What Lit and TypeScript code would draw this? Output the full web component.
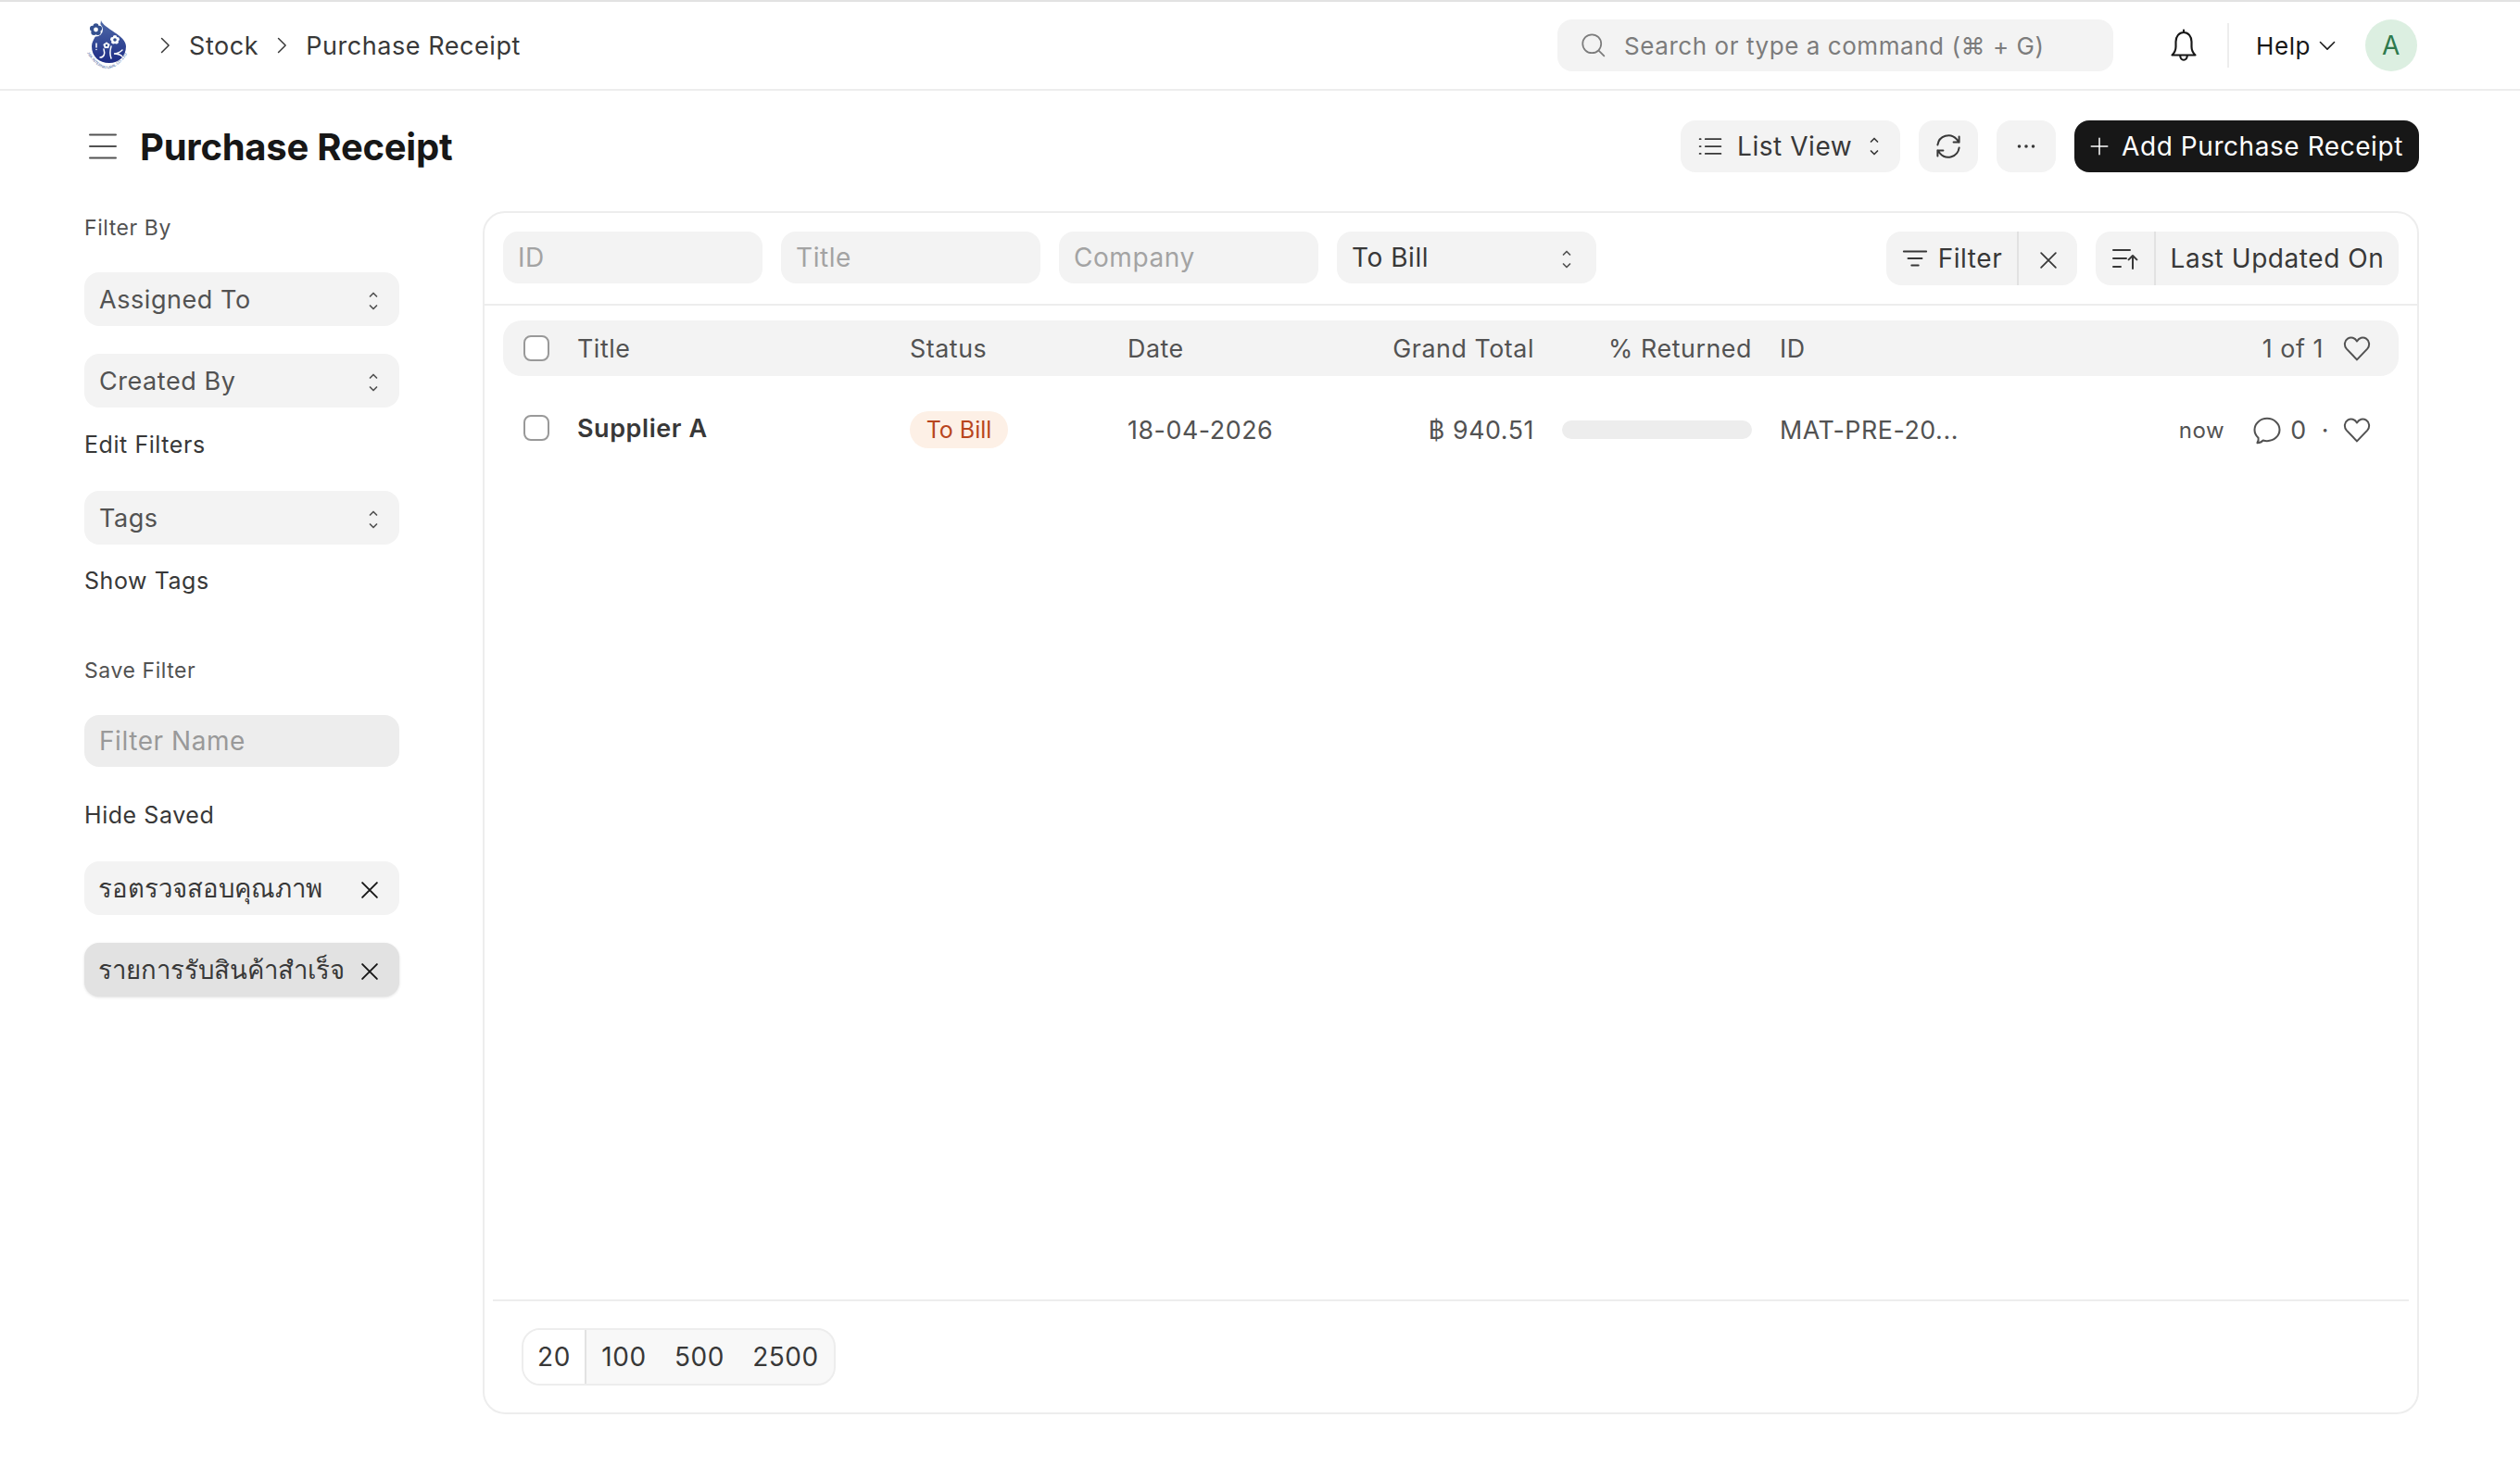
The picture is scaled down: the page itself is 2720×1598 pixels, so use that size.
import { LitElement, html, css, svg } from 'lit'
import { customElement } from 'lit/decorators.js'

// shared stroke icon wrapper, all icons are drawn on a 16 unit grid
const icon = (size: number, body: unknown, sw = 1) => html`
    <svg class="icon" width=${size} height=${size} viewBox="0 0 16 16" fill="none"
        stroke="currentColor" stroke-width=${sw} stroke-linecap="round" stroke-linejoin="round">${body}</svg>
`

const updown = html`
    <svg class="updown" width="12" height="22" viewBox="0 0 12 22" fill="none" stroke="currentColor"
        stroke-width="1.7" stroke-linecap="round" stroke-linejoin="round">
        <path d="M2.5 6 6 2.5 9.5 6M2.5 16 6 19.5 9.5 16" />
    </svg>
`
const closeX = svg`<path d="M3.5 3.5l9 9M12.5 3.5l-9 9" />`
const heart = svg`<path d="M8 14.2 2.4 8.3C.9 6.6 1.2 4 3 2.8c1.8-1.2 3.9-.5 5 1.4 1.1-1.9 3.2-2.6 5-1.4 1.8 1.2 2.1 3.8.6 5.5L8 14.2Z" />`
const chevron = svg`<path d="M5.500 2.500 11 8l-5.500 5.500" />`

const flower = (x: number, y: number, r: number, fill: string, hole: string) => svg`
    <g fill=${fill}>
        ${[0, 72, 144, 216, 288].map((a) => {
            const t = (a * Math.PI) / 180
            return svg`<circle cx=${x + Math.sin(t) * r * 0.62} cy=${y - Math.cos(t) * r * 0.62} r=${r * 0.5} />`
        })}
        <circle cx=${x} cy=${y} r=${r * 0.4} fill=${hole} />
    </g>
`

@customElement('app-root')
export class AppRoot extends LitElement {
    static styles = css`
        :host {
            display: block;
            width: 2720px;
            min-height: 1598px;
            background: #fff;
            color: #383838;
            font-family: Inter, 'Noto Sans', sans-serif;
            font-size: 28px;
            letter-spacing: 0.02em;
        }

        .icon,
        .updown {
            display: block;
            flex: none;
        }

        .navbar {
            box-sizing: border-box;
            height: 98px;
            border-top: 2px solid #e2e2e2;
            border-bottom: 2px solid #ededed;
            padding: 0 111px 0 93px;
            display: flex;
            align-items: center;
        }

        .crumbs {
            display: flex;
            align-items: center;
            margin-left: 26px;
            flex: 1;
            color: #383838;
            font-size: 27px;
        }

        .crumbs .icon {
            margin-right: 15px;
        }

        .crumbs span {
            margin-right: 14px;
        }

        .search {
            box-sizing: border-box;
            width: 600px;
            height: 56px;
            border-radius: 16px;
            background: #f3f3f3;
            color: #7c7c7c;
            display: flex;
            align-items: center;
            padding-left: 25px;
            gap: 19px;
            font-size: 26px;
        }

        .bell {
            margin-left: 56px;
            color: #171717;
        }

        .nav-sep {
            width: 2px;
            height: 48px;
            background: #ededed;
            margin: 0 29px 0 27px;
        }

        .help {
            display: flex;
            align-items: center;
            gap: 7px;
            color: #171717;
            font-size: 26px;
        }

        .avatar {
            width: 56px;
            height: 56px;
            border-radius: 50%;
            background: #dcefe1;
            color: #2f7a4d;
            display: flex;
            align-items: center;
            justify-content: center;
            margin-left: 30px;
        }

        .page {
            padding: 0 109px 0 91px;
        }

        .page-head {
            display: flex;
            align-items: center;
            height: 56px;
            padding: 32px 0 42px;
        }

        .page-head .burger {
            margin-left: 4px;
            margin-right: 24px;
            color: #525252;
        }

        h1 {
            margin: 0;
            flex: 1;
            font-size: 40px;
            font-weight: 700;
            color: #171717;
            letter-spacing: -0.006em;
        }

        .btn {
            box-sizing: border-box;
            height: 56px;
            border-radius: 16px;
            background: #f3f3f3;
            color: #383838;
            display: flex;
            align-items: center;
            justify-content: center;
            margin-left: 20px;
        }

        .btn.list {
            width: 237px;
            justify-content: flex-start;
            padding-left: 18px;
            gap: 15px;
        }

        .btn.list span {
            margin-right: 3px;
        }

        .btn.square {
            width: 64px;
        }

        .btn.primary {
            width: 372px;
            background: #171717;
            color: #fff;
            gap: 14px;
        }

        .body {
            display: flex;
            gap: 90px;
            align-items: flex-start;
        }

        .sidebar {
            width: 340px;
            flex: none;
            color: #525252;
        }

        .side-label {
            font-size: 23px;
            line-height: 36px;
            color: #525252;
        }

        .side-link {
            font-size: 25px;
            line-height: 36px;
            color: #383838;
        }

        .side-field {
            box-sizing: border-box;
            height: 58px;
            border-radius: 16px;
            background: #f3f3f3;
            color: #525252;
            display: flex;
            align-items: center;
            justify-content: space-between;
            padding: 0 22px 0 16px;
            white-space: nowrap;
            font-size: 27px;
        }

        .side-field .updown {
            margin-top: 4px;
        }

        .side-field.name {
            height: 56px;
            background: #ededed;
            color: #999;
            font-size: 28px;
        }

        .side-field.saved {
            color: #383838;
            padding: 0 18px 0 15px;
            font-size: 27.5px;
            letter-spacing: 0;
        }

        .side-field.active {
            background: #e2e2e2;
            box-shadow: 0 1px 3px rgba(0, 0, 0, 0.12);
        }

        .side-field .x {
            color: #171717;
            margin-top: 4px;
        }

        .mt22 {
            margin-top: 22px;
        }

        .mt21 {
            margin-top: 21px;
        }

        .mt30 {
            margin-top: 30px;
        }

        .mt32 {
            margin-top: 32px;
        }

        .mt34 {
            margin-top: 34px;
        }

        .mt61 {
            margin-top: 61px;
        }

        .card {
            box-sizing: border-box;
            flex: 1;
            height: 1299px;
            border: 2px solid #ededed;
            border-radius: 24px;
            display: flex;
            flex-direction: column;
        }

        .filters {
            display: flex;
            align-items: flex-start;
            gap: 20px;
            padding: 20px 20px 20px;
            height: 58px;
            border-bottom: 2px solid #ededed;
        }

        .filters .std {
            box-sizing: border-box;
            width: 280px;
            height: 56px;
            border-radius: 16px;
            background: #f3f3f3;
            color: #a3a3a3;
            display: flex;
            align-items: center;
            padding: 0 26px 0 16px;
        }

        .filters .std.select {
            color: #383838;
            justify-content: space-between;
        }

        .filters .std.select .updown {
            color: #525252;
            margin-top: 3px;
        }

        .spacer {
            flex: 1;
        }

        .group {
            height: 58px;
            border-radius: 16px;
            background: #f3f3f3;
            display: flex;
            align-items: stretch;
            color: #383838;
        }

        .group > div {
            display: flex;
            align-items: center;
            justify-content: center;
            box-sizing: border-box;
        }

        .group > div + div {
            border-left: 2px solid #e2e2e2;
        }

        .group .f-main {
            width: 141px;
            gap: 10px;
        }

        .group .f-x {
            width: 65px;
            padding-top: 4px;
        }

        .group .s-icon {
            width: 63px;
        }

        .group .s-label {
            width: 264px;
        }

        .list-head,
        .list-row {
            display: grid;
            grid-template-columns: 58px 359px 235px 232px 207px 235px 300px 1fr;
            align-items: center;
            padding: 0 29px 0 22px;
            margin: 0 20px;
            color: #525252;
            font-size: 26.8px;
        }

        .list-head {
            margin-top: 16px;
            height: 60px;
            background: #f3f3f3;
            border-radius: 20px;
        }

        .list-row {
            height: 116px;
        }

        .check {
            box-sizing: border-box;
            width: 28px;
            height: 28px;
            border-radius: 8px;
            border: 2px solid #999;
            background: #fff;
        }

        .list-row .check {
            margin-bottom: 4px;
        }

        .num {
            text-align: right;
        }

        .pad {
            padding-left: 30px;
        }

        .end {
            display: flex;
            align-items: center;
            justify-content: flex-end;
        }

        .strong {
            font-weight: 600;
            color: #383838;
            font-size: 27px;
            margin-bottom: 4px;
        }

        .badge {
            display: inline-flex;
            align-items: center;
            justify-content: center;
            box-sizing: border-box;
            width: 106px;
            height: 40px;
            border-radius: 20px;
            background: #fdf0e6;
            color: #b8451d;
            font-size: 25px;
            letter-spacing: 0;
        }

        .bar {
            height: 20px;
            border-radius: 10px;
            background: #ededed;
        }

        .now {
            font-size: 24px;
            margin-right: 28px;
        }

        .count {
            margin-left: 7px;
        }

        .dot {
            margin: 0 14px 0 16px;
        }

        .of {
            margin-right: 20px;
        }

        .listing {
            flex: 1;
        }

        .foot {
            margin: 0 9px;
            border-top: 2px solid #ededed;
            padding: 29px 31px 0;
            height: 91px;
        }

        .paging {
            display: inline-flex;
            box-sizing: border-box;
            height: 62px;
            border: 2px solid #ededed;
            border-radius: 20px;
            background: #f8f8f8;
            overflow: hidden;
            align-items: stretch;
            color: #383838;
        }

        .paging div {
            display: flex;
            align-items: center;
            justify-content: center;
            box-sizing: border-box;
        }

        .paging .cur {
            width: 68px;
            background: #fff;
            border-right: 2px solid #e2e2e2;
        }

        .paging .n100 {
            width: 81px;
        }

        .paging .n500 {
            width: 82px;
        }

        .paging .n2500 {
            width: 104px;
        }
    `

    private logo() {
        return html`
            <svg width="48" height="55" viewBox="93 22 48 55">
                <defs>
                    <linearGradient id="drop" x1="0" y1="0" x2="0" y2="1">
                        <stop offset="0" stop-color="#4f6aa8" />
                        <stop offset="1" stop-color="#1d2c85" />
                    </linearGradient>
                    <path id="ring" d="M94 57Q116 93 140 54" />
                </defs>
                <path d="M109 22C112 31 136 38 136 50 136 61 128 68 118 68 107 68 99 61 99 50 99 42 108 36 109 22Z"
                    fill="url(#drop)" />
                <circle cx="103.500" cy="32" r="7.500" fill="#fff" />
                ${flower(103.5, 32, 6, '#34508f', '#fff')}
                ${flower(124, 43, 4.5, '#fff', '#34508f')}
                ${flower(115, 49, 3.2, '#fff', '#34508f')}
                <path d="M104 47v4M104 53.500v.1M112 53c1.500 5 .5 9-4 9M120 50c-1.500 5-1.500 9 0 13M132 54c-3 3-6 4-9 4 3 0 7 1 9 3"
                    fill="none" stroke="#fff" stroke-width="1.500" stroke-linecap="round" />
                <text font-size="4.100" fill="#3d5c9e" font-family="Liberation Sans, sans-serif" letter-spacing="0">
                    <textPath href="#ring">J&amp;K INTERNATURAL CO.,LTD</textPath>
                </text>
            </svg>
        `
    }

    render() {
        return html`
            <div class="navbar">
                ${this.logo()}
                <div class="crumbs">
                    ${icon(22, chevron, 1.1)}
                    <span>Stock</span>
                    ${icon(22, chevron, 1.1)}
                    <span>Purchase Receipt</span>
                </div>
                <div class="search">
                    ${icon(28, svg`<circle cx="7" cy="7" r="5.700" /><path d="M11.200 11.200 14.500 14.500" />`)}
                    <span>Search or type a command (⌘ + G)</span>
                </div>
                <div class="bell">
                    ${icon(40, svg`<path d="M3 12.200h10c-1-1-1.600-2-1.600-3.600V6.400C11.400 4.200 10 2.400 8 2.400S4.600 4.200 4.600 6.400v2.200C4.600 10.200 4 11.200 3 12.200ZM6.500 12.500c0 1 .6 1.800 1.500 1.800s1.500-.8 1.500-1.800M8 1.400v1" />`, 0.85)}
                </div>
                <div class="nav-sep"></div>
                <div class="help">
                    <span>Help</span>
                    ${icon(22, svg`<path d="M2.500 5.500 8 11l5.500-5.500" />`, 1.1)}
                </div>
                <div class="avatar">A</div>
            </div>

            <div class="page">
                <div class="page-head">
                    <div class="burger">
                        ${icon(32, svg`<path d="M1 1.800h14M1 8h14M1 14.200h14" />`)}
                    </div>
                    <h1>Purchase Receipt</h1>
                    <div class="btn list">
                        ${icon(28, svg`<path d="M5 3.500h9.500M5 8h9.500M5 12.500h9.500M1.500 3.500h.6M1.500 8h.6M1.500 12.500h.6" />`)}
                        <span>List View</span>
                        ${updown}
                    </div>
                    <div class="btn square">
                        ${icon(32, svg`<path d="M2.200 7.200A5.900 5.900 0 0 1 12.500 4.200l1.300 1.600M13.800 8.800A5.900 5.900 0 0 1 3.500 11.800l-1.300-1.600M13.800 2.800v3h-3M2.200 13.200v-3h3" />`)}
                    </div>
                    <div class="btn square">
                        ${icon(24, svg`<circle cx="3" cy="8" r=".6" /><circle cx="8" cy="8" r=".6" /><circle cx="13" cy="8" r=".6" />`, 1.2)}
                    </div>
                    <div class="btn primary">
                        ${icon(20, svg`<path d="M8 1v14M1 8h14" />`, 1.2)}
                        <span>Add Purchase Receipt</span>
                    </div>
                </div>

                <div class="body">
                    <div class="sidebar">
                        <div class="side-label">Filter By</div>
                        <div class="side-field mt30">Assigned To ${updown}</div>
                        <div class="side-field mt30">Created By ${updown}</div>
                        <div class="side-link mt22">Edit Filters</div>
                        <div class="side-field mt32">Tags ${updown}</div>
                        <div class="side-link mt21">Show Tags</div>
                        <div class="side-label mt61">Save Filter</div>
                        <div class="side-field name mt30">Filter Name</div>
                        <div class="side-link mt34">Hide Saved</div>
                        <div class="side-field saved mt32">
                            <span>รอตรวจสอบคุณภาพ</span>
                            <span class="x">${icon(28, closeX, 1.1)}</span>
                        </div>
                        <div class="side-field saved active mt30">
                            <span>รายการรับสินค้าสำเร็จ</span>
                            <span class="x">${icon(28, closeX, 1.1)}</span>
                        </div>
                    </div>

                    <div class="card">
                        <div class="filters">
                            <div class="std">ID</div>
                            <div class="std">Title</div>
                            <div class="std">Company</div>
                            <div class="std select">To Bill ${updown}</div>
                            <div class="spacer"></div>
                            <div class="group">
                                <div class="f-main">
                                    ${icon(30, svg`<path d="M1.500 4h13M4 8h8M6 12h4" />`)}
                                    <span>Filter</span>
                                </div>
                                <div class="f-x">${icon(28, closeX)}</div>
                            </div>
                            <div class="group">
                                <div class="s-icon">
                                    ${icon(32, svg`<path d="M1.500 3.500h9M1.500 8h7M1.500 12.500h4M12 13.500V6.500M9.800 8.700 12 6.500l2.200 2.200" />`)}
                                </div>
                                <div class="s-label">Last Updated On</div>
                            </div>
                        </div>

                        <div class="listing">
                            <div class="list-head">
                                <div class="check"></div>
                                <div>Title</div>
                                <div>Status</div>
                                <div>Date</div>
                                <div class="num">Grand Total</div>
                                <div class="num">% Returned</div>
                                <div class="pad">ID</div>
                                <div class="end">
                                    <span class="of">1 of 1</span>
                                    ${icon(32, heart)}
                                </div>
                            </div>
                            <div class="list-row">
                                <div class="check"></div>
                                <div class="strong">Supplier A</div>
                                <div><span class="badge">To Bill</span></div>
                                <div>18-04-2026</div>
                                <div class="num">฿ 940.51</div>
                                <div class="pad"><div class="bar"></div></div>
                                <div class="pad">MAT-PRE-20...</div>
                                <div class="end">
                                    <span class="now">now</span>
                                    ${icon(36, svg`<path d="M3.300 14.300c1.100 0 2.200-.5 2.800-1.200.6.200 1.200.3 1.900.3 3.300 0 6-2.400 6-5.400s-2.700-5.400-6-5.400-6 2.400-6 5.400c0 1.500.7 2.900 1.800 3.900.2.900 0 1.700-.5 2.400Z" />`, 0.9)}
                                    <span class="count">0</span>
                                    <span class="dot">·</span>
                                    ${icon(32, heart)}
                                </div>
                            </div>
                        </div>

                        <div class="foot">
                            <div class="paging">
                                <div class="cur">20</div>
                                <div class="n100">100</div>
                                <div class="n500">500</div>
                                <div class="n2500">2500</div>
                            </div>
                        </div>
                    </div>
                </div>
            </div>
        `
    }
}
